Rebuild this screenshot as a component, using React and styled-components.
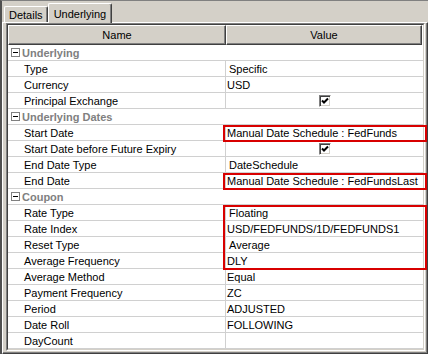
import React from 'react'
import styled, {createGlobalStyle} from 'styled-components'

const GlobalStyle = createGlobalStyle`
  html, body {
    margin: 0;
    padding: 0;
    background: #d4d0c8;
  }
  body {
    font-family: "Liberation Sans", Arial, sans-serif;
    font-size: 11px;
    color: #000;
  }
`

const Window = styled.div`
  width: 428px;
  height: 354px;
  box-sizing: border-box;
  background: #d4d0c8;
  border-top: 1px solid #808080;
  border-left: 2px solid #505050;
  display: flex;
  flex-direction: column;
  overflow: hidden;
`

const TabStrip = styled.div`
  display: flex;
  align-items: flex-end;
  height: 21px;
  padding-left: 2px;
`

const Tab = styled.div`
  box-sizing: border-box;
  height: ${p => (p.$active ? 20 : 16)}px;
  margin-bottom: ${p => (p.$active ? -1 : 0)}px;
  padding: 0 ${p => (p.$active ? 5 : 4)}px;
  display: flex;
  align-items: center;
  background: #d4d0c8;
  border-top: 1px solid #fff;
  border-left: 1px solid #fff;
  border-right: 1px solid #404040;
  border-radius: 2px 2px 0 0;
  box-shadow: inset -1px 0 0 #808080;
  position: relative;
  z-index: ${p => (p.$active ? 1 : 0)};
  white-space: nowrap;
`

const Panel = styled.div`
  flex: 1;
  display: flex;
  flex-direction: column;
  border-top: 1px solid #fff;
  border-left: 1px solid #fff;
  border-right: 1px solid #404040;
  border-bottom: 1px solid #404040;
  box-shadow: inset -1px -1px 0 #808080;
  padding: 0 2px 2px 3px;
`

const GridFrame = styled.div`
  flex: 1;
  display: flex;
  border-top: 1px solid #808080;
  border-left: 1px solid #808080;
  border-right: 1px solid #fff;
  border-bottom: 1px solid #fff;
`

const GridBody = styled.div`
  flex: 1;
  display: flex;
  flex-direction: column;
  background: #fff;
  border-top: 1px solid #404040;
  border-left: 1px solid #404040;
  border-right: 1px solid #d4d0c8;
  border-bottom: 1px solid #d4d0c8;
`

const HeaderRow = styled.div`
  display: grid;
  grid-template-columns: 218px 196px;
  height: 20px;
`

const HeaderCell = styled.div`
  box-sizing: border-box;
  display: flex;
  align-items: center;
  justify-content: center;
  background: #d4d0c8;
  border-top: 1px solid #fff;
  border-left: 1px solid #fff;
  border-right: 1px solid #404040;
  border-bottom: 1px solid #404040;
  box-shadow: inset -1px -1px 0 #808080;
`

const Row = styled.div`
  box-sizing: border-box;
  display: grid;
  grid-template-columns: 218px 196px;
  height: 16px;
  border-bottom: 1px solid #d0d0d0;
`

const GroupRow = styled.div`
  box-sizing: border-box;
  display: flex;
  align-items: center;
  height: 16px;
  padding-left: 3px;
  border-bottom: 1px solid #d0d0d0;
  color: #808080;
  font-weight: bold;
`

const Toggle = styled.span`
  box-sizing: border-box;
  width: 9px;
  height: 9px;
  margin-right: 2px;
  border: 1px solid #808080;
  display: flex;
  align-items: center;
  justify-content: center;
  &::before {
    content: "";
    width: 5px;
    height: 1px;
    background: #000;
  }
`

const NameCell = styled.div`
  display: flex;
  align-items: center;
  padding-left: 16px;
  border-right: 1px solid #d0d0d0;
  white-space: nowrap;
`

const ValueCell = styled.div`
  position: relative;
  display: flex;
  align-items: center;
  justify-content: ${p => (p.$center ? 'center' : 'flex-start')};
  padding-left: ${p => p.$pad}px;
  white-space: nowrap;
  ${p => p.$mark && `
    &::after {
      content: "";
      position: absolute;
      left: -3px;
      right: -5px;
      top: ${p.$mark === 'single' || p.$mark === 'top' ? 0 : -1}px;
      bottom: ${p.$mark === 'single' || p.$mark === 'bottom' ? -2 : 0}px;
      border-left: 2px solid #d80000;
      border-right: 2px solid #d80000;
      border-top: ${p.$mark === 'single' || p.$mark === 'top' ? '2px solid #d80000' : 'none'};
      border-bottom: ${p.$mark === 'single' || p.$mark === 'bottom' ? '2px solid #d80000' : 'none'};
      pointer-events: none;
    }
  `}
`

const CheckBox = styled.span`
  box-sizing: border-box;
  width: 12px;
  height: 12px;
  background: #fff;
  border-top: 1px solid #808080;
  border-left: 1px solid #808080;
  border-right: 1px solid #fff;
  border-bottom: 1px solid #fff;
  box-shadow: inset 1px 1px 0 #404040, inset -1px -1px 0 #d4d0c8;
  display: flex;
  align-items: center;
  justify-content: center;
`

const sections = [
  {title: 'Underlying', rows: [
    {name: 'Type', value: 'Specific', pad: 3},
    {name: 'Currency', value: 'USD'},
    {name: 'Principal Exchange', check: true},
  ]},
  {title: 'Underlying Dates', rows: [
    {name: 'Start Date', value: 'Manual Date Schedule : FedFunds', mark: 'single'},
    {name: 'Start Date before Future Expiry', check: true},
    {name: 'End Date Type', value: 'DateSchedule', pad: 3},
    {name: 'End Date', value: 'Manual Date Schedule : FedFundsLast', mark: 'single'},
  ]},
  {title: 'Coupon', rows: [
    {name: 'Rate Type', value: 'Floating', pad: 3, mark: 'top'},
    {name: 'Rate Index', value: 'USD/FEDFUNDS/1D/FEDFUNDS1', mark: 'mid'},
    {name: 'Reset Type', value: 'Average', pad: 3, mark: 'mid'},
    {name: 'Average Frequency', value: 'DLY', mark: 'bottom'},
    {name: 'Average Method', value: 'Equal'},
    {name: 'Payment Frequency', value: 'ZC'},
    {name: 'Period', value: 'ADJUSTED'},
    {name: 'Date Roll', value: 'FOLLOWING'},
    {name: 'DayCount', value: ''},
  ]},
]

function Check() {
  return (
    <CheckBox>
      <svg width="8" height="8" viewBox="0 0 8 8">
        <polyline points="1,3.5 3,5.5 7,1.5" fill="none" stroke="#000" strokeWidth="2" />
      </svg>
    </CheckBox>
  )
}

export default function App() {
  return (
    <Window>
      <GlobalStyle />
      <TabStrip>
        <Tab>Details</Tab>
        <Tab $active>Underlying</Tab>
      </TabStrip>
      <Panel>
        <GridFrame>
          <GridBody>
            <HeaderRow>
              <HeaderCell>Name</HeaderCell>
              <HeaderCell>Value</HeaderCell>
            </HeaderRow>
            {sections.map(sec => (
              <React.Fragment key={sec.title}>
                <GroupRow><Toggle />{sec.title}</GroupRow>
                {sec.rows.map(r => (
                  <Row key={r.name}>
                    <NameCell>{r.name}</NameCell>
                    <ValueCell $pad={r.pad || 1} $mark={r.mark} $center={r.check}>
                      {r.check ? <Check /> : r.value}
                    </ValueCell>
                  </Row>
                ))}
              </React.Fragment>
            ))}
          </GridBody>
        </GridFrame>
      </Panel>
    </Window>
  )
}
